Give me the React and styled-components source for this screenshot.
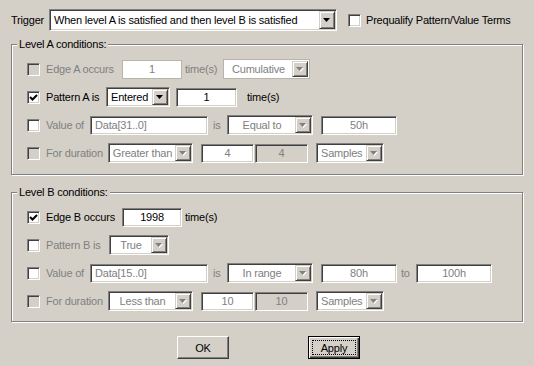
import React from 'react';
import styled, { createGlobalStyle, css } from 'styled-components';

const FACE = '#D4D0C8';
const SHADOW = '#808080';
const DARK = '#404040';
const LIGHT = '#FFFFFF';
const GRAY = '#808080';

const Global = createGlobalStyle`
  html, body { margin: 0; padding: 0; background: ${FACE}; }
  body {
    font-family: "Liberation Sans", Arial, sans-serif;
    font-size: 11px;
    letter-spacing: -0.2px;
    color: #000;
  }
  * { box-sizing: border-box; }
`;

const sunken = css`
  border: 1px solid;
  border-color: ${SHADOW} ${LIGHT} ${LIGHT} ${SHADOW};
  box-shadow: inset 1px 1px 0 ${DARK}, inset -1px -1px 0 ${FACE};
`;

const flatBorder = css`
  border: 1px solid #B8B4AC;
  box-shadow: inset 1px 1px 0 ${LIGHT}, inset -1px -1px 0 ${LIGHT};
`;

const Dialog = styled.div`
  width: 534px;
  height: 366px;
  background: ${FACE};
  padding: 9px 0 0 11px;
  display: flex;
  flex-direction: column;
`;

const Header = styled.div`
  display: flex;
  align-items: center;
  height: 22px;
`;

const Text = styled.span`
  display: inline-block;
  flex: none;
  white-space: nowrap;
  margin-left: ${p => p.$ml || 0}px;
  width: ${p => (p.$w ? `${p.$w}px` : 'auto')};
  color: ${p => (p.$disabled ? GRAY : '#000')};
`;

const Group = styled.section`
  position: relative;
  width: 512px;
  height: ${p => p.$h}px;
  margin-top: ${p => p.$mt}px;
  border: 1px solid ${SHADOW};
  box-shadow: inset 1px 1px 0 ${LIGHT}, 1px 1px 0 ${LIGHT};
  padding: 14px 0 0 15px;
  display: flex;
  flex-direction: column;
  gap: 8px;
`;

const Legend = styled.h2`
  position: absolute;
  top: -7px;
  left: 5px;
  margin: 0;
  padding: 0 2px;
  background: ${FACE};
  font-size: 11px;
  font-weight: normal;
  line-height: 13px;
`;

const Row = styled.div`
  display: flex;
  align-items: center;
  height: 20px;
`;

const CheckLabel = styled.label`
  display: flex;
  align-items: center;
  gap: 6px;
  flex: none;
  margin-left: ${p => p.$ml || 0}px;
  width: ${p => (p.$w ? `${p.$w}px` : 'auto')};
  color: ${p => (p.$disabled ? GRAY : '#000')};
  white-space: nowrap;
`;

const Box = styled.span`
  width: 13px;
  height: 13px;
  flex: none;
  display: flex;
  align-items: center;
  justify-content: center;
  ${sunken};
  background: ${p => (p.$face ? FACE : LIGHT)};
`;

const Field = styled.input`
  flex: none;
  width: ${p => p.$w}px;
  height: 19px;
  margin: 0 0 0 ${p => p.$ml || 0}px;
  padding: 0 4px;
  font: inherit;
  letter-spacing: inherit;
  text-align: ${p => p.$align || 'center'};
  color: ${p => (p.$disabled ? GRAY : '#000')};
  background: ${p => (p.$face ? FACE : LIGHT)};
  outline: none;
  ${p => (p.$flat ? flatBorder : sunken)};
`;

const Combo = styled.div`
  flex: none;
  display: flex;
  width: ${p => p.$w}px;
  height: ${p => p.$h || 20}px;
  margin-left: ${p => p.$ml || 0}px;
  padding: 1px;
  background: ${LIGHT};
  ${p => (p.$flat ? flatBorder : sunken)};
`;

const ComboText = styled.span`
  flex: 1;
  min-width: 0;
  display: flex;
  align-items: center;
  justify-content: ${p => (p.$left ? 'flex-start' : 'center')};
  padding: 0 ${p => (p.$left ? 3 : 0)}px 0 ${p => (p.$left ? 3 : 0)}px;
  white-space: nowrap;
  overflow: hidden;
  color: ${p => (p.$disabled ? GRAY : '#000')};
`;

const ComboButton = styled.span`
  flex: none;
  width: 16px;
  display: flex;
  align-items: center;
  justify-content: center;
  background: ${FACE};
  border: 1px solid;
  border-color: ${FACE} ${DARK} ${DARK} ${FACE};
  box-shadow: inset 1px 1px 0 ${LIGHT}, inset -1px -1px 0 ${SHADOW};
`;

const Arrow = ({ disabled }) => (
  <svg width="8" height="5" viewBox="0 0 8 5" style={{ display: 'block' }}>
    {disabled && <polygon points="1,1 8,1 4.5,5" fill={LIGHT} />}
    <polygon points="0,0 7,0 3.5,4" fill={disabled ? GRAY : '#000'} />
  </svg>
);

const Check = () => (
  <svg width="9" height="9" viewBox="0 0 9 9" style={{ display: 'block' }}>
    <polyline points="1,4 3.5,6.5 8,2" fill="none" stroke="#000" strokeWidth="2" />
  </svg>
);

const Select = ({ w, h, ml, value, left, disabled, flat }) => (
  <Combo $w={w} $h={h} $ml={ml} $flat={flat}>
    <ComboText $left={left} $disabled={disabled}>{value}</ComboText>
    <ComboButton>
      <Arrow disabled={disabled} />
    </ComboButton>
  </Combo>
);

const CheckItem = ({ w, ml, checked, face, disabled, children }) => (
  <CheckLabel $w={w} $ml={ml} $disabled={disabled}>
    <Box $face={face}>{checked && <Check />}</Box>
    {children}
  </CheckLabel>
);

const Input = ({ w, ml, value, align, disabled, face, flat }) => (
  <Field
    readOnly
    value={value}
    $w={w}
    $ml={ml}
    $align={align}
    $disabled={disabled}
    $face={face}
    $flat={flat}
  />
);

const Buttons = styled.div`
  display: flex;
  gap: 79px;
  margin-top: 14px;
  padding-left: 166px;
`;

const PushButton = styled.button`
  width: 52px;
  height: 23px;
  padding: 3px;
  display: flex;
  font: inherit;
  letter-spacing: inherit;
  color: #000;
  background: ${FACE};
  cursor: default;
  ${p =>
    p.$default
      ? css`
          border: 1px solid #000;
          box-shadow: inset 1px 1px 0 ${LIGHT}, inset -1px -1px 0 ${DARK}, inset -2px -2px 0 ${SHADOW};
        `
      : css`
          border: 1px solid;
          border-color: ${LIGHT} ${DARK} ${DARK} ${LIGHT};
          box-shadow: inset -1px -1px 0 ${SHADOW}, inset 1px 1px 0 ${FACE};
        `}
`;

const ButtonFace = styled.span`
  flex: 1;
  display: flex;
  align-items: center;
  justify-content: center;
  border: 1px ${p => (p.$focus ? 'dotted #000' : 'solid transparent')};
`;

export default function App() {
  return (
    <>
      <Global />
      <Dialog>
        <Header>
          <Text $w={38}>Trigger</Text>
          <Select w={288} h={22} left value="When level A is satisfied and then level B is satisfied" />
          <CheckItem ml={11}>
            <Text $ml={-1}>Prequalify Pattern/Value Terms</Text>
          </CheckItem>
        </Header>

        <Group $h={131} $mt={13}>
          <Legend>Level A conditions:</Legend>
          <Row>
            <CheckItem w={95} face disabled>Edge A occurs</CheckItem>
            <Input w={60} value="1" disabled flat />
            <Text $ml={3} $w={38} $disabled>time(s)</Text>
            <Select w={87} value="Cumulative" disabled flat />
          </Row>
          <Row>
            <CheckItem w={79} checked>Pattern A is</CheckItem>
            <Select w={64} value="Entered" left />
            <Input ml={6} w={61} value="1" />
            <Text $ml={10}>time(s)</Text>
          </Row>
          <Row>
            <CheckItem w={63} disabled>Value of</CheckItem>
            <Input w={118} value="Data[31..0]" align="left" disabled />
            <Text $ml={5} $w={14} $disabled>is</Text>
            <Select w={86} value="Equal to" disabled />
            <Input ml={8} w={76} value="50h" disabled />
          </Row>
          <Row>
            <CheckItem w={81} face disabled>For duration</CheckItem>
            <Select w={85} value="Greater than" disabled />
            <Input ml={8} w={53} value="4" disabled />
            <Input ml={1} w={53} value="4" disabled face />
            <Select ml={8} w={68} value="Samples" left disabled />
          </Row>
        </Group>

        <Group $h={130} $mt={17}>
          <Legend>Level B conditions:</Legend>
          <Row>
            <CheckItem w={95} checked>Edge B occurs</CheckItem>
            <Input w={60} value="1998" />
            <Text $ml={3}>time(s)</Text>
          </Row>
          <Row>
            <CheckItem w={82} disabled>Pattern B is</CheckItem>
            <Select w={60} value="True" disabled />
          </Row>
          <Row>
            <CheckItem w={63} disabled>Value of</CheckItem>
            <Input w={118} value="Data[15..0]" align="left" disabled />
            <Text $ml={5} $w={14} $disabled>is</Text>
            <Select w={86} value="In range" disabled />
            <Input ml={8} w={76} value="80h" disabled />
            <Text $ml={4} $w={15} $disabled>to</Text>
            <Input w={76} value="100h" disabled />
          </Row>
          <Row>
            <CheckItem w={81} face disabled>For duration</CheckItem>
            <Select w={85} value="Less than" disabled />
            <Input ml={8} w={53} value="10" disabled />
            <Input ml={1} w={53} value="10" disabled face />
            <Select ml={8} w={68} value="Samples" left disabled />
          </Row>
        </Group>

        <Buttons>
          <PushButton>
            <ButtonFace>OK</ButtonFace>
          </PushButton>
          <PushButton $default>
            <ButtonFace $focus>Apply</ButtonFace>
          </PushButton>
        </Buttons>
      </Dialog>
    </>
  );
}
